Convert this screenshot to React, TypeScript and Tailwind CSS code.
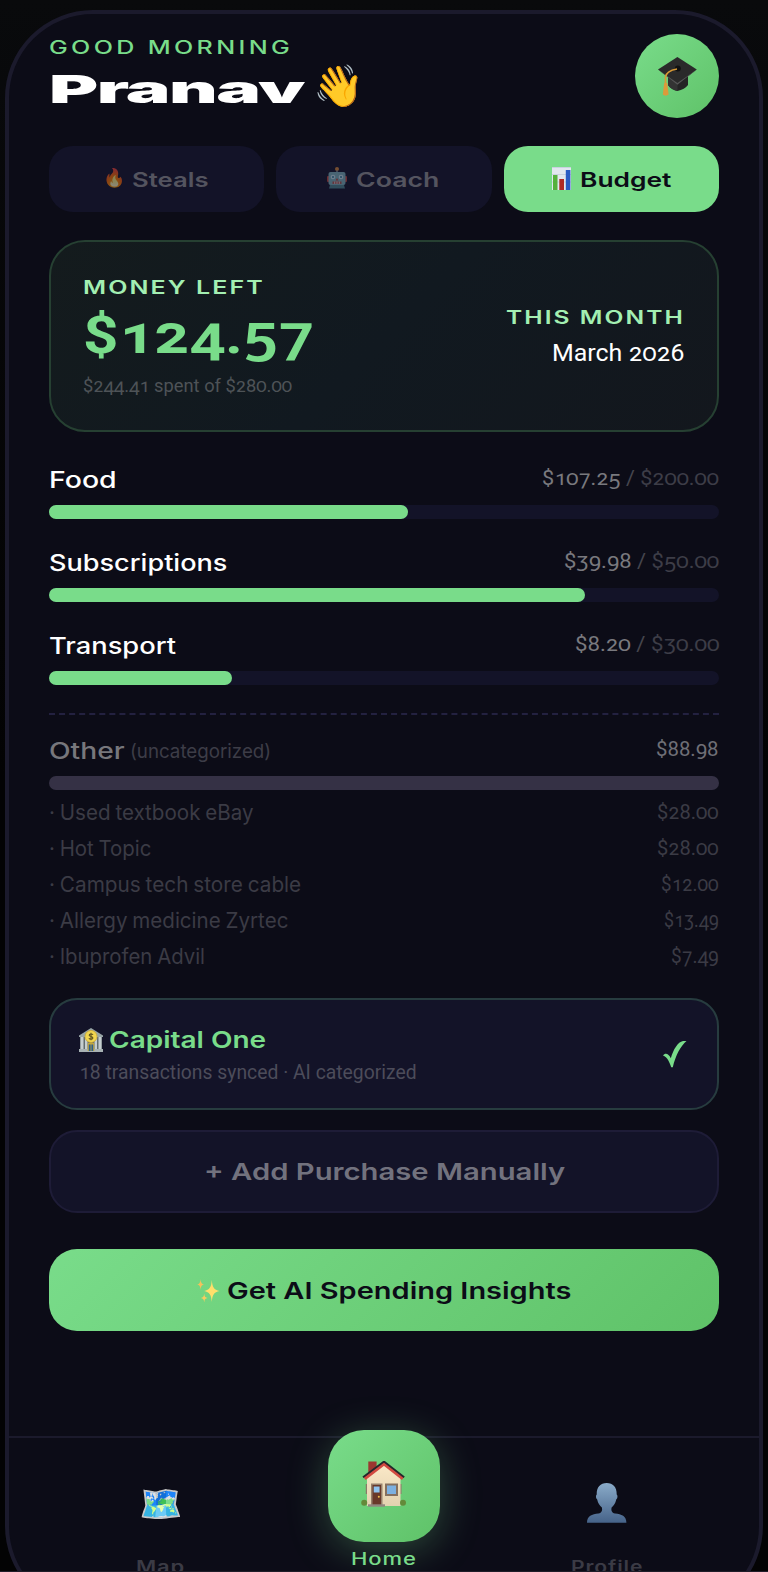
import { useLayoutEffect, useRef, useState, type ReactNode } from "react";

type FitProps = {
  width: number;
  className?: string;
  children: ReactNode;
};

function Fit({ width, className = "", children }: FitProps) {
  const ref = useRef<HTMLSpanElement>(null);
  const [scale, setScale] = useState(1);

  useLayoutEffect(() => {
    if (ref.current) setScale(width / ref.current.offsetWidth);
  }, [width]);

  return (
    <span className="flex shrink-0 items-center" style={{ width }}>
      <span
        ref={ref}
        className={`inline-block shrink-0 origin-left whitespace-nowrap ${className}`}
        style={{ transform: `scaleX(${scale})` }}
      >
        {children}
      </span>
    </span>
  );
}

function CapIcon() {
  return (
    <svg viewBox="0 0 39 39" className="size-[39px]">
      <path d="M10 19V28C12 31 16 33.5 19.5 34C24 33 28 31 30 28V19Z" fill="#242424" />
      <path d="M10 19V28C12 31 16 33.5 19.5 34V27Z" fill="#333" />
      <path d="M0 12.5L19.4 0L38.8 12.5L19.4 27.5Z" fill="#2a2a2a" />
      <path d="M0 12.5L19.4 26L38.8 12.5L19.4 27.8Z" fill="#555" />
      <circle cx="19.8" cy="11.5" r="3" fill="#111" />
      <path d="M19 12C13 13 8 16 7.5 20V26" fill="none" stroke="#d99a35" strokeWidth="1.7" />
      <path d="M6.2 26H9.2L10.6 37.5C9 39 6.2 39 4.8 37.5Z" fill="#dd9a3a" />
    </svg>
  );
}

function RobotIcon() {
  return (
    <svg viewBox="0 0 20 22" className="h-[22px] w-5">
      <circle cx="10" cy="2" r="2" fill="#d98a3a" />
      <path d="M9.3 3.5H10.7V6H9.3Z" fill="#8fa3ab" />
      <rect x="0" y="9" width="2.5" height="6" rx="1" fill="#c4463c" />
      <rect x="17.5" y="9" width="2.5" height="6" rx="1" fill="#c4463c" />
      <rect x="1.5" y="5" width="17" height="13" rx="2" fill="#7fb5bd" />
      <path d="M3 18H17L18 21.5H2Z" fill="#4f8790" />
      <circle cx="6" cy="10" r="2.3" fill="#c9e8f2" />
      <circle cx="14" cy="10" r="2.3" fill="#c9e8f2" />
      <circle cx="6" cy="10" r="1" fill="#2f7f9c" />
      <circle cx="14" cy="10" r="1" fill="#2f7f9c" />
      <path d="M10 11L11.4 13.5H8.6Z" fill="#c4463c" />
      <rect x="5.5" y="14.5" width="9" height="2.4" fill="#b5564e" />
      <path d="M7.7 14.5V16.9M10 14.5V16.9M12.3 14.5V16.9" stroke="#e8eef0" strokeWidth="0.8" />
    </svg>
  );
}

function ChartIcon() {
  return (
    <svg viewBox="0 0 19 23" className="h-[23px] w-[19px]">
      <path d="M0 0H19V23H0Z" fill="#e1e7ef" />
      <path d="M0 .5H19M0 7.5H19M0 15H19" stroke="#c3cdda" strokeWidth="0.8" />
      <path d="M1 8H5.5V23H1Z" fill="#55b13c" />
      <path d="M7.3 12H12V23H7.3Z" fill="#b02a25" />
      <path d="M13.8 3H18.4V23H13.8Z" fill="#2a5bc4" />
    </svg>
  );
}

function BankIcon() {
  return (
    <svg viewBox="0 0 24 24" className="size-6">
      <path d="M0 7.5L12 0L24 7.5V9H0Z" fill="#98a5a6" />
      <path d="M1 9H23V21H1Z" fill="#626d70" />
      <path d="M1.5 9H4.5V21H1.5ZM6 9H8.5V21H6ZM15.5 9H18V21H15.5ZM19.5 9H22.5V21H19.5Z" fill="#c5ced0" />
      <path d="M0 21H24V24H0Z" fill="#a8b2b4" />
      <path d="M8.7 15H15.3V23H8.7Z" fill="#c2a63f" />
      <path d="M9.8 16.5H11.6V23H9.8ZM12.4 16.5H14.2V23H12.4Z" fill="#2d5f8e" />
      <circle cx="12" cy="8.5" r="6" fill="#f1d64f" stroke="#c9a632" strokeWidth="0.8" />
      <path d="M14 6.8C13.2 5.6 10.2 5.7 10.2 7.2C10.2 8.9 13.9 8.1 13.9 10C13.9 11.5 10.8 11.6 9.9 10.2M12 4.8V12.2" fill="none" stroke="#5d511f" strokeWidth="1.1" />
    </svg>
  );
}

function SparklesIcon() {
  return (
    <svg viewBox="0 0 23 24" className="h-6 w-[23px]" fill="#ffdf6b">
      <path d="M14.8 1C15.4 8.5 17 10.8 22.5 12C17 13.2 15.4 15.5 14.8 23C14.2 15.5 12.6 13.2 7.1 12C12.6 10.8 14.2 8.5 14.8 1Z" />
      <path d="M3.6 0C3.9 3.6 4.6 4.9 7 5.5C4.6 6.1 3.9 7.4 3.6 11C3.3 7.4 2.6 6.1 .2 5.5C2.6 4.9 3.3 3.6 3.6 0Z" fill="#f5c15c" />
      <path d="M7.2 14.5C7.5 17.5 8.2 18.5 10.6 19C8.2 19.5 7.5 20.5 7.2 23.5C6.9 20.5 6.2 19.5 3.8 19C6.2 18.5 6.9 17.5 7.2 14.5Z" fill="#f9cc5f" />
    </svg>
  );
}

function HouseIcon() {
  return (
    <svg viewBox="0 0 45 46" className="h-[46px] w-[45px]">
      <defs>
        <linearGradient id="wall" x1="0" y1="0" x2="0" y2="1">
          <stop offset="0" stopColor="#fbe9c8" />
          <stop offset="1" stopColor="#e3d2b0" />
        </linearGradient>
      </defs>
      <path d="M7.3 .5H15.6V12H7.3Z" fill="#9c3730" />
      <path d="M4.8 23H7V33H4.8ZM39 23H40.5V33H39Z" fill="#8a7a68" />
      <path d="M6 16L23 2.5L39.5 16V45H6Z" fill="url(#wall)" />
      <path d="M3.5 17.5L23 2.5L42 17.5" fill="none" stroke="#d24a41" strokeWidth="3.6" />
      <path d="M2 16.3L23 .5L43.2 16.3" fill="none" stroke="#23282c" strokeWidth="1.8" />
      <circle cx="3.2" cy="41.8" r="3" fill="#648a3a" />
      <circle cx="42" cy="41.8" r="3" fill="#648a3a" />
      <path d="M10 22.5H21.5V44H10Z" fill="#96806c" />
      <path d="M11.5 24H20V44H11.5Z" fill="#69392a" />
      <path d="M12.7 25.5H18.6V31.5H12.7Z" fill="#8fc3ef" />
      <circle cx="17.8" cy="35.8" r="1" fill="#f2c14f" />
      <path d="M24 22.5H37V35H24Z" fill="#85705f" />
      <path d="M26 24.5H35V33H26Z" fill="#7db0e0" />
      <path d="M7 43.3H24V45.7H7Z" fill="#91867f" />
    </svg>
  );
}

function PersonIcon() {
  return (
    <svg viewBox="0 0 40 40" className="size-10">
      <defs>
        <linearGradient id="person" x1="0" y1="0" x2="0" y2="1">
          <stop offset="0" stopColor="#8aabc9" />
          <stop offset="1" stopColor="#466389" />
        </linearGradient>
      </defs>
      <path
        d="M19.7 0C26 0 29.8 4 29.7 11.5C31 12.5 30.6 15.5 29.2 16.6C28.4 20.5 26.7 22.7 24.6 24.4C24 27.5 24.6 29.6 28 30.4C34.5 31.2 39.4 32.5 39.4 39.8H0C0 32.5 5 31.2 11.5 30.4C14.9 29.6 15.5 27.5 14.9 24.4C12.8 22.7 11 20.5 10.2 16.6C8.8 15.5 8.5 12.5 9.7 11.5C9.6 4 13.4 0 19.7 0Z"
        fill="url(#person)"
      />
    </svg>
  );
}

const TABS = [
  { icon: <span className="-mx-0.5 text-[18px] leading-none">🔥</span>, label: "Steals", width: 77, active: false },
  { icon: <RobotIcon />, label: "Coach", width: 84, active: false },
  { icon: <ChartIcon />, label: "Budget", width: 91, active: true },
];

const CATEGORIES = [
  { name: "Food", nameWidth: 68, spent: "$107.25", limit: "$200.00", width: 177, percent: 53.6 },
  { name: "Subscriptions", nameWidth: 179, spent: "$39.98", limit: "$50.00", width: 155, percent: 80 },
  { name: "Transport", nameWidth: 127, spent: "$8.20", limit: "$30.00", width: 144, percent: 27.33 },
];

const OTHER_ITEMS = [
  { name: "Used textbook eBay", nameWidth: 205, amount: "$28.00", width: 62 },
  { name: "Hot Topic", nameWidth: 102, amount: "$28.00", width: 62 },
  { name: "Campus tech store cable", nameWidth: 252, amount: "$12.00", width: 58 },
  { name: "Allergy medicine Zyrtec", nameWidth: 239, amount: "$13.49", width: 55 },
  { name: "Ibuprofen Advil", nameWidth: 156, amount: "$7.49", width: 48 },
];

function Header() {
  return (
    <header className="flex items-start justify-between">
      <div>
        <div className="flex h-[27px] items-center text-[#79dc8a]">
          <Fit width={244} className="text-[18px] font-medium tracking-[2.4px]">GOOD MORNING</Fit>
        </div>
        <h1 className="flex h-14 items-center text-white">
          <Fit width={254} className="text-[39px] font-black tracking-[-0.8px]">Pranav</Fit>
          <span className="-mt-2 ml-2.5 text-[41px] leading-none">👋</span>
        </h1>
      </div>
      <div className="flex size-[84px] items-center justify-center rounded-full bg-linear-135 from-[#79dc8a] to-[#5fc268]">
        <CapIcon />
      </div>
    </header>
  );
}

function Tabs() {
  return (
    <div className="mt-7 grid grid-cols-3 gap-3">
      {TABS.map((tab) => (
        <button
          key={tab.label}
          className={`flex h-[66px] items-center justify-center gap-[9px] rounded-3xl pt-0.5 ${
            tab.active ? "bg-[#79dc8a] text-[#0c0c17]" : "bg-[#131328] text-[#54545f]"
          }`}
        >
          <span className={tab.active ? "-mt-1" : "-mt-1 opacity-50"}>{tab.icon}</span>
          <Fit width={tab.width} className="text-[20px] font-semibold">{tab.label}</Fit>
        </button>
      ))}
    </div>
  );
}

function BalanceCard() {
  return (
    <section className="mt-7 flex h-[192px] items-center justify-between rounded-[36px] border-2 border-[#264032] bg-linear-135 from-[#141b1d] via-[#111920] to-[#13171d] px-8">
      <div className="pt-[5px]">
        <div className="flex h-[26px] items-center text-[#a3efb2]">
          <Fit width={182} className="text-[18px] font-semibold tracking-[1.5px]">MONEY LEFT</Fit>
        </div>
        <div className="flex h-[69px] items-center pt-[3px] text-[#79dc8a]">
          <Fit width={231} className="font-['Roboto'] text-[52px] font-bold oldstyle-nums">$124.57</Fit>
        </div>
        <div className="flex h-[34px] items-center text-[#4e5357]">
          <Fit width={209} className="font-['Roboto'] text-[19px] oldstyle-nums">$244.41 spent of $280.00</Fit>
        </div>
      </div>
      <div className="flex flex-col items-end pb-0.5">
        <div className="flex h-[35px] items-center text-[#a3efb2]">
          <Fit width={179} className="text-[18px] font-semibold tracking-[1.5px]">THIS MONTH</Fit>
        </div>
        <div className="flex h-[35px] items-center text-white">
          <Fit width={133} className="font-['Roboto'] text-[24px] oldstyle-nums">March 2026</Fit>
        </div>
      </div>
    </section>
  );
}

function Categories() {
  return (
    <section className="mt-[31px] flex flex-col gap-[27px]">
      {CATEGORIES.map((item) => (
        <div key={item.name}>
          <div className="flex h-[34px] items-center justify-between">
            <span className="text-white">
              <Fit width={item.nameWidth} className="text-[23px] font-medium">{item.name}</Fit>
            </span>
            <span className="pb-[3px]">
              <Fit width={item.width} className="font-['Roboto'] text-[21px] text-[#3d3d47] oldstyle-nums">
                <span className="text-[#79797e]">{item.spent}</span>
                <span className="text-[#45454d]"> / </span>
                {item.limit}
              </Fit>
            </span>
          </div>
          <div className="mt-2 h-3.5 rounded-lg bg-[#131328]">
            <div className="h-full rounded-lg bg-[#79dc8a]" style={{ width: `${item.percent}%` }} />
          </div>
        </div>
      ))}
    </section>
  );
}

function OtherSpending() {
  return (
    <section className="mt-7 border-t-2 border-dashed border-[#232140] pt-[19px]">
      <div className="flex h-[34px] items-center justify-between">
        <div className="flex items-center gap-[5px]">
          <span className="text-[#77777c]">
            <Fit width={76} className="text-[23px] font-medium">Other</Fit>
          </span>
          <span className="pt-[3px] text-[#3d3d47]">
            <Fit width={141} className="text-[19px]">(uncategorized)</Fit>
          </span>
        </div>
        <span className="pb-[3px] text-[#6f6f76]">
          <Fit width={63} className="font-['Roboto'] text-[21px] oldstyle-nums">$88.98</Fit>
        </span>
      </div>
      <div className="mt-2 h-3.5 rounded-lg bg-[#353145]" />
      <ul className="mt-[5px] text-[#3b3b45]">
        {OTHER_ITEMS.map((item) => (
          <li key={item.name} className="flex h-9 items-center justify-between">
            <Fit width={item.nameWidth} className="text-[21px] [word-spacing:-1px]">· {item.name}</Fit>
            <Fit width={item.width} className="font-['Roboto'] text-[21px] oldstyle-nums">{item.amount}</Fit>
          </li>
        ))}
      </ul>
    </section>
  );
}

function BankCard() {
  return (
    <section className="mt-[23px] flex h-28 items-center justify-between rounded-[28px] border-2 border-[#273c3f] bg-[#131328] pr-[30px] pl-7">
      <div className="pt-[5px]">
        <div className="flex h-8 items-center gap-1.5 text-[#79dc8a]">
          <span className="-mt-0.5">
            <BankIcon />
          </span>
          <Fit width={157} className="text-[23px] font-semibold">Capital One</Fit>
        </div>
        <div className="flex h-8 items-center text-[#4c4c5a]">
          <Fit width={338} className="font-['Roboto'] text-[19.5px] oldstyle-nums">
            18 transactions synced · AI categorized
          </Fit>
        </div>
      </div>
      <svg viewBox="0 0 24 28" className="h-7 w-6" fill="#79dc8a">
        <path d="M0 15.5C2.4 12.2 5.8 14 7.8 18.2C10.5 9.5 14.8 2 20 1.1C21.5 .8 22.7 1 23.5 1.1C17.8 5.8 12.7 15.3 9.8 27.2H8.2C6.5 22.3 4.4 16.7 0 15.5Z" />
      </svg>
    </section>
  );
}

function BottomNav() {
  return (
    <nav className="mt-[105px] border-t-2 border-[#1b1a2c] px-10">
      <div className="grid grid-cols-3">
        <div className="flex flex-col items-center pt-[47px]">
          <span className="flex h-9 items-center text-[35px] leading-none">🗺️</span>
          <span className="mt-[35px] flex h-6 items-center text-[#3b3b45]">
            <Fit width={49} className="text-[17px] font-semibold tracking-[0.7px]">Map</Fit>
          </span>
        </div>
        <div className="-mt-2 flex flex-col items-center">
          <div className="flex size-28 items-center justify-center rounded-[36px] bg-linear-135 from-[#79dc8a] to-[#5fc268] pb-1 shadow-[0_8px_40px_rgba(121,220,138,0.3)]">
            <HouseIcon />
          </div>
          <span className="mt-1.5 flex h-6 items-center text-[#79dc8a]">
            <Fit width={66} className="text-[17px] font-medium tracking-[0.7px]">Home</Fit>
          </span>
        </div>
        <div className="flex flex-col items-center pt-[45px]">
          <PersonIcon />
          <span className="mt-[33px] flex h-6 items-center text-[#3b3b45]">
            <Fit width={72} className="text-[17px] font-semibold tracking-[0.7px]">Profile</Fit>
          </span>
        </div>
      </div>
    </nav>
  );
}

export default function App() {
  return (
    <main className="h-[1572px] w-[768px] overflow-hidden border-b border-[#1f1d29] bg-linear-to-b from-[#090a0c] via-[#030304] to-[#030304] pt-2.5 pl-[5px] font-['Inter',sans-serif]">
      <div className="h-[1604px] w-[758px] overflow-hidden rounded-[88px] border-4 border-[#1b1a2c] bg-[#0c0c17]">
        <div className="px-10 pt-5">
          <Header />
          <Tabs />
          <BalanceCard />
          <Categories />
          <OtherSpending />
          <BankCard />
          <button className="mt-5 flex h-[83px] w-full items-center justify-center rounded-[28px] border-2 border-[#1e1c37] bg-[#131328] text-[#72727e]">
            <Fit width={361} className="text-[23.5px] font-semibold">+ Add Purchase Manually</Fit>
          </button>
          <button className="mt-9 flex h-[82px] w-full items-center justify-center gap-[7px] rounded-[28px] bg-linear-135 from-[#79dc8a] to-[#5fc268] pt-px text-[#0c0c17]">
            <SparklesIcon />
            <Fit width={344} className="text-[23.5px] font-semibold">Get AI Spending Insights</Fit>
          </button>
        </div>
        <BottomNav />
      </div>
    </main>
  );
}
